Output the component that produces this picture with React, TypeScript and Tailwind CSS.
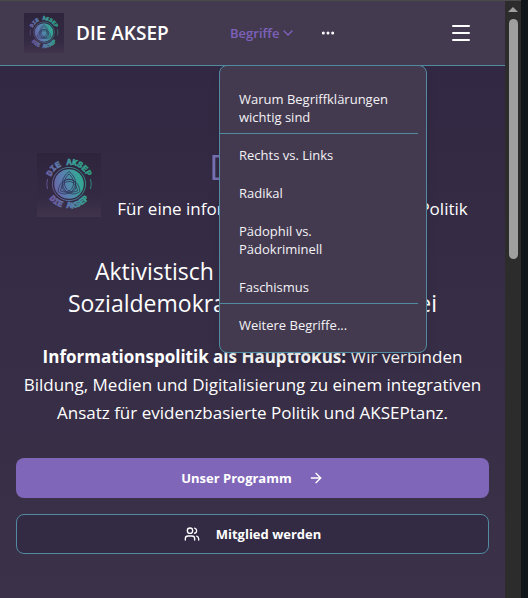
import { useId } from "react";
import { ArrowRight, ChevronDown, Ellipsis, Menu, Users } from "lucide-react";

const terms = [
  { label: "Warum Begriffklärungen wichtig sind", divider: true },
  { label: "Rechts vs. Links", divider: false },
  { label: "Radikal", divider: false },
  { label: "Pädophil vs. Pädokriminell", divider: false },
  { label: "Faschismus", divider: true },
  { label: "Weitere Begriffe...", divider: false },
];

function Logo({ className }: { className: string }) {
  const id = useId();
  const paint = `url(#${id}g)`;
  return (
    <svg viewBox="0 0 64 64" className={className} role="img" aria-label="Die AKSEP">
      <defs>
        <linearGradient id={`${id}g`} gradientUnits="userSpaceOnUse" x1="10" y1="38" x2="54" y2="26">
          <stop offset="0" stopColor="#72579f" />
          <stop offset="0.4" stopColor="#5b7db0" />
          <stop offset="0.75" stopColor="#36a597" />
          <stop offset="1" stopColor="#2f9c84" />
        </linearGradient>
        <linearGradient id={`${id}b`} x1="0" y1="0" x2="0" y2="1">
          <stop offset="0" stopColor="#2e253d" />
          <stop offset="0.7" stopColor="#342a43" />
          <stop offset="1" stopColor="#40344c" />
        </linearGradient>
        <path id={`${id}t`} d="M12.500 31 A19.500 19.500 0 0 1 51.500 31" />
        <path id={`${id}u`} d="M7.500 31 A24.500 24.500 0 0 0 56.500 31" />
      </defs>
      <rect width="64" height="64" fill={`url(#${id}b)`} />
      <circle cx="32" cy="31" r="16.6" fill="none" stroke={paint} strokeWidth="0.8" />
      <circle cx="32" cy="31" r="14.8" fill={paint} />
      <g fill="none" stroke="#2f3355" strokeWidth="0.8">
        <path d="M32 18.500 C39 24 40.500 31 36 37 C32 42 25 42 21 38.500" />
        <path d="M32 18.500 C25 24 23.500 31 28 37 C32 42 39 42 43 38.500" />
        <path d="M21 38.500 C22 30 27 26.500 32 26.500 C37 26.500 42 30 43 38.500" />
        <path d="M32 21 C37 25.500 38 31 34.500 36 C31.500 39.500 27 39.500 23.500 38" />
        <path d="M32 21 C27 25.500 26 31 29.500 36 C32.500 39.500 37 39.500 40.500 38" />
        <path d="M23.500 38 C24.500 31.500 28 28.500 32 28.500 C36 28.500 39.500 31.500 40.500 38" />
        <circle cx="32" cy="33" r="7" />
      </g>
      <path d="M10.500 26 Q9 31 10.500 36 M53.500 26 Q55 31 53.500 36" fill="none" stroke={paint} strokeWidth="0.8" />
      <g fill={paint} stroke={paint} strokeWidth="0.6" fontSize="8.500" className="font-['Liberation_Mono',monospace] font-bold">
        <text textAnchor="middle">
          <textPath href={`#${id}t`} startOffset="50%">DIE AKSEP</textPath>
        </text>
        <text textAnchor="middle">
          <textPath href={`#${id}u`} startOffset="50%">DIE AKSEP</textPath>
        </text>
      </g>
    </svg>
  );
}

function TermsMenu() {
  return (
    <ul className="absolute top-full left-[219px] z-10 flex w-[208px] flex-col gap-[5px] rounded-lg border border-[#508ba2] bg-[#433a50] pt-[17px] pr-2 pb-[10px] shadow-lg">
      {terms.map((term) => (
        <li key={term.label} className={`border-b ${term.divider ? "border-[#508ba2]" : "border-transparent"}`}>
          <a href="#" className="block py-[7px] pr-6 pl-[19px] text-[13px] leading-[18px] font-medium text-[#f4f2f5]">
            {term.label}
          </a>
        </li>
      ))}
    </ul>
  );
}

function Header() {
  return (
    <header className="relative border-t border-b border-t-[#4a4a4a] border-b-[#508ba2] bg-[#433a50]">
      <div className="flex h-16 items-center px-6">
        <a href="#" className="flex w-[206px] shrink-0 items-center gap-3">
          <Logo className="size-10" />
          <span className="text-[19px] leading-7 font-semibold">DIE AKSEP</span>
        </a>
        <nav className="flex items-center gap-6">
          <button type="button" className="flex items-center gap-px text-[13px] leading-5 font-semibold text-[#7d61ba]">
            Begriffe
            <ChevronDown size={16} />
          </button>
          <button type="button" aria-label="Mehr">
            <Ellipsis size={16} strokeWidth={2.5} />
          </button>
        </nav>
        <button type="button" aria-label="Menü" className="ml-auto p-2">
          <Menu size={24} />
        </button>
      </div>
      <TermsMenu />
    </header>
  );
}

function Hero() {
  return (
    <main className="flex-1 bg-linear-to-b from-[#322843] to-[#3b3249] px-4 pt-[81px] text-center">
      <div className="flex items-center justify-center gap-4">
        <Logo className="size-16 shrink-0" />
        <div>
          <h1 className="bg-linear-to-r from-[#8066b9] to-[#508ba2] bg-clip-text text-[35px] leading-10 font-medium text-transparent">
            DIE AKSEP
          </h1>
          <p className="mt-2 text-[17px] leading-7">Für eine informationsbasierte, soziale Politik</p>
        </div>
      </div>
      <h2 className="mt-8 text-[23px] leading-8">
        Aktivistisch und faktenbasiert
        <br />
        Sozialdemokratische Kleinst-Partei
      </h2>
      <p className="mt-6 text-[17px] leading-7">
        <strong className="font-bold">Informationspolitik als Hauptfokus:</strong> Wir verbinden Bildung, Medien und
        Digitalisierung zu einem integrativen Ansatz für evidenzbasierte Politik und AKSEPtanz.
      </p>
      <div className="mt-[31px] flex flex-col gap-4 text-[13px] leading-5 font-bold">
        <button type="button" className="flex h-10 items-center justify-center gap-4 rounded-lg bg-[#8066b9]">
          Unser Programm
          <ArrowRight size={16} />
        </button>
        <button
          type="button"
          className="flex h-10 items-center justify-center gap-4 rounded-lg border border-[#508ba2] bg-[#332a43]"
        >
          <Users size={16} />
          Mitglied werden
        </button>
      </div>
    </main>
  );
}

function ScrollTrack() {
  return (
    <div aria-hidden="true" className="flex w-4 shrink-0 flex-col items-center border-t border-[#4a4a4a] bg-[#2c2c2c] pt-[6px]">
      <svg viewBox="0 0 10 5" className="h-[5px] w-[10px]">
        <path d="M0 5 L5 0 L10 5Z" fill="#9f9f9f" />
      </svg>
      <div className="mt-[7px] h-[240px] w-[9px] rounded-full bg-[#9f9f9f]" />
    </div>
  );
}

export default function App() {
  return (
    <div className="flex min-h-screen bg-[#11161a] pr-[7px] font-['Open_Sans','Noto_Sans',sans-serif] text-white">
      <div className="flex min-w-0 flex-1 flex-col">
        <Header />
        <Hero />
      </div>
      <ScrollTrack />
    </div>
  );
}
